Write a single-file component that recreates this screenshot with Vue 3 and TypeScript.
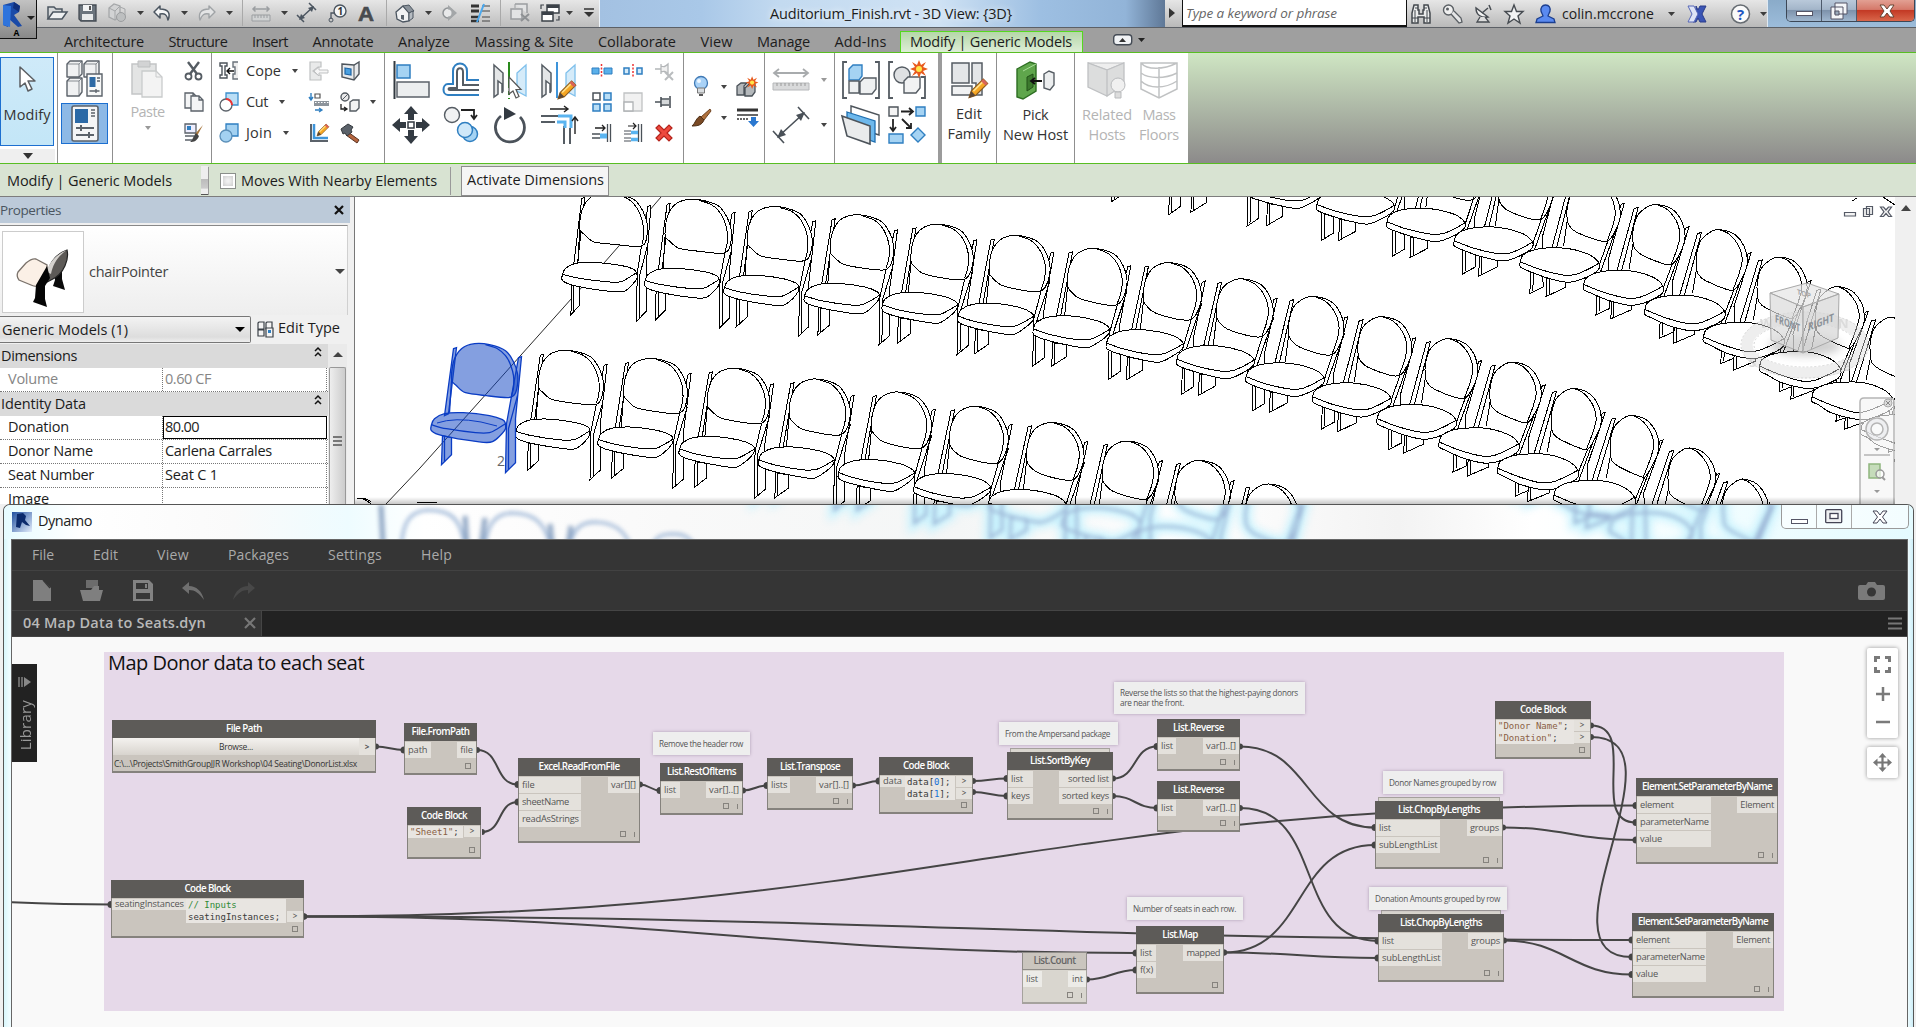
<script setup lang="ts">
import { h } from 'vue'

type Pt = [number, number]

/* Spreads letters so that a label takes the given width */
const vFit = {
  mounted(el: HTMLElement, b: { value?: number }) {
    if (!b.value) return
    const n = (el.textContent || '').length
    el.style.letterSpacing = (b.value - el.getBoundingClientRect().width) / n + 'px'
  },
}

/* ---------- icons: [width, height, markup] ---------- */
const D = '#4b5560'
const B = '#2f7fc1'
const cubes = (s: string, f: string) =>
  `<g fill="${f}" stroke="${s}" stroke-width="1.4" stroke-linejoin="round"><path d="M1 4l3-3h12v13l-3 3H1z"/><path d="M18 4l3-3h12v13l-3 3H18z"/><path d="M1 21l3-3h12v14l-3 4H1z"/><path d="M1 4h12v13M13 4l3-3M18 4h12v10M30 4l3-3M1 21h12v15M13 21l3-3" fill="none" stroke-width=".7"/></g>`
const sheet = (x: number, y: number, s: string) =>
  `<path transform="translate(${x} ${y})" d="M0 0h8l4 4v11H0z M8 0v4h4" fill="#f4f5f6" stroke="${s}" stroke-width="1.3"/>`
const pencil = (x: number, y: number, k = 1) =>
  `<g transform="translate(${x} ${y}) scale(${k})"><path d="M0 17l2-6L13 0l4 4L6 15z" fill="#f6a623" stroke="#8a5a1c" stroke-width="1"/><path d="M11 2l2-2 4 4-2 2z" fill="#d9635a"/><path d="M0 17l2-6 4 4z" fill="#5a4636"/><path d="M4 11l8-8" stroke="#ffe08a" stroke-width="1.5"/></g>`
const burst = (x: number, y: number) =>
  `<g transform="translate(${x} ${y})"><path d="M0-9l2 5 5-3-3 5 5 2-5 2 3 5-5-3-2 5-2-5-5 3 3-5-5-2 5-2-3-5 5 3z" fill="#e85a1c"/><circle r="3" fill="#ffe54a"/></g>`

const icons: Record<string, [number, number, string]> = {
  open: [22, 20, `<path d="M2 16V4h6l2 2h6v3" fill="#d5d8da" stroke="${D}" stroke-width="1.5"/><path d="M2 16L7 9h14l-5 7z" fill="#eef0f1" stroke="${D}" stroke-width="1.5"/>`],
  save: [19, 20, `<path d="M1 2h17v16H3l-2-2z" fill="#6b747d" stroke="#454c54" stroke-width="1.3"/><path d="M5 2h9v6H5z" fill="#f2f3f4"/><path d="M11 3h2v4h-2z" fill="#555"/><path d="M4 11h11v6H4z" fill="#e8eaeb"/>`],
  sync: [21, 20, `<path d="M2 5l5-4 6 2v10l-5 4-6-3z" fill="#d2d3d4" stroke="#a5a7a9" stroke-width="1.3"/><path d="M2 5l6 3 5-5M8 8v9M13 4l5 2v8" stroke="#a5a7a9" fill="none"/><circle cx="14" cy="14" r="4.5" fill="#bdbfc0" stroke="#9b9d9f"/>`],
  undo: [21, 20, `<path d="M8 3L2 9l6 6v-4c5-1 7 1 8 6 3-7 0-11-8-11z" fill="#f5f6f7" stroke="${D}" stroke-width="1.5" stroke-linejoin="round"/>`],
  redo: [20, 20, `<path d="M12 3l6 6-6 6v-4c-5-1-7 1-9 6-2-7 1-11 9-11z" fill="#e3e4e5" stroke="#9fa3a6" stroke-width="1.4" stroke-linejoin="round"/>`],
  qmeas: [20, 20, `<path d="M2 6h16M4.5 3.5L2 6l2.5 2.5M15.5 3.5L18 6l-2.5 2.5" stroke="#9b9ea1" stroke-width="1.5" fill="none"/><path d="M1 12h18v6H1z" fill="#d0d2d3" stroke="#9b9ea1"/><path d="M4 12v3M7 12v3M10 12v3M13 12v3M16 12v3" stroke="#9b9ea1"/>`],
  qdim: [21, 20, `<path d="M4 16L17 4M1 12l7 7M13 0l7 7" stroke="${D}" stroke-width="1.5"/><path d="M3 17l2-6 4 4zM18 3l-2 6-4-4z" fill="${D}"/>`],
  qtag: [20, 20, `<circle cx="13" cy="8" r="6" fill="#f5f6f7" stroke="${D}" stroke-width="1.4"/><path d="M8 10H4v6" stroke="${D}" fill="none" stroke-width="1.3"/><circle cx="4" cy="17" r="2" fill="none" stroke="${D}"/><text x="10.5" y="12" font-size="10" font-weight="700" font-family="Open Sans" fill="#333">1</text>`],
  qA: [18, 20, `<text x="1" y="18" font-size="21" font-weight="700" font-family="Liberation Sans" fill="#484b4f" stroke="#484b4f" stroke-width=".6" textLength="16" lengthAdjust="spacingAndGlyphs">A</text>`],
  house: [20, 20, `<path d="M1 9l7-6 6 7v8l-6 1-6-3z" fill="#f1f2f3" stroke="${D}" stroke-width="1.3"/><path d="M8 3l6-1 5 6-5 2z" fill="#8b939b" stroke="${D}"/><path d="M14 10l4-2v7l-4 3z" fill="#b6bcc2" stroke="${D}"/><path d="M6 12h3v5l-3-1z" fill="#5a636c"/>`],
  section: [16, 20, `<circle cx="6" cy="10" r="5" fill="#e4e5e6" stroke="#8f9396" stroke-width="1.5"/><path d="M6 2l9 8-9 8z" fill="#a3a6a8"/><circle cx="6" cy="10" r="3.5" fill="#e8e9ea"/>`],
  thin: [21, 20, `<path d="M1 3h8M1 8h8" stroke="#333" stroke-width="3"/><path d="M1 14h8M1 18h8" stroke="#333" stroke-width="2.5"/><path d="M12 3h8M12 8h8M12 14h8M12 18h8" stroke="#444" stroke-width="1"/><path d="M14 1L7 19" stroke="#4aa8ee" stroke-width="2"/>`],
  closev: [21, 20, `<path d="M6 1h12v9M2 6h11v10H2z" fill="#e2e3e4" stroke="#9a9da0" stroke-width="1.5"/><path d="M6 1v4" stroke="#9a9da0"/><path d="M12 11l8 7M20 11l-8 7" stroke="#8e9194" stroke-width="2"/>`],
  switchv: [20, 20, `<path d="M7 2h12v8H7z" fill="#fff" stroke="#3b4148" stroke-width="1.5"/><path d="M7 3.5h12" stroke="#3b4148" stroke-width="3"/><path d="M2 9h11v9H2z" fill="#fff" stroke="#3b4148" stroke-width="1.5"/><path d="M2 10.5h11" stroke="#3b4148" stroke-width="3"/><path d="M4 2H1v4M16 17h3v-4" fill="none" stroke="#3b4148" stroke-width="1.2"/>`],
  custom: [12, 10, `<path d="M1 1h10" stroke="#333" stroke-width="1.5"/><path d="M1 4h10l-5 5z" fill="#333"/>`],
  dn: [7, 4, `<path d="M0 0h7L3.5 4z" fill="#3d3d3d"/>`],
  bino: [20, 20, `<path d="M3 1h4v5h1v4h4V6h1V1h4l2 8v10h-6v-6H7v6H1V9z" fill="#eceded" stroke="#43484e" stroke-width="1.5"/><path d="M4 6v12M16 6v12M1 14h6M13 14h6M4 4h3M13 4h3" stroke="#43484e" stroke-width="1"/>`],
  key: [21, 20, `<circle cx="6.5" cy="6" r="5" fill="#f0f0f0" stroke="#5a5f64" stroke-width="1.4"/><circle cx="5.5" cy="5" r="1.5" fill="#5a5f64"/><path d="M9 10l8 9 3-1-1-4-7-7" fill="#e5e6e7" stroke="#5a5f64" stroke-width="1.3"/>`],
  sat: [19, 20, `<path d="M2 4c0 7 5 10 12 9z" fill="#f2f2f2" stroke="#474c52" stroke-width="1.4"/><path d="M8 9l6-5M15 1l2 5" stroke="#474c52" stroke-width="1.5"/><path d="M6 13l-3 5h12l-4-5" fill="#ddd" stroke="#474c52" stroke-width="1.3"/>`],
  star: [20, 20, `<path d="M10 1l2.5 6.5H19l-5 4.5 2 7-6-4-6 4 2-7-5-4.5h6.5z" fill="#f2f3f4" stroke="#454a50" stroke-width="1.4"/>`],
  person: [21, 20, `<path d="M10.5 1c4 0 5 3 4.5 6-.5 2-1.5 3-2 5l6 3 1 3.5H1L2 15l6-3c-.5-2-1.5-3-2-5-.5-3 1-6 4.5-6z" fill="#5a8af0" stroke="#1c3f8f" stroke-width="1.3"/>`],
  exch: [19, 18, `<path d="M9 1l2 4 2-4h6l-4 8 4 8h-6l-2-4-2 4H6l3-8z" fill="#3b55b5" stroke="#2a3c8a"/><path d="M1 1h6l4 8-4 8H1l4-8z" fill="#dfe5f6" stroke="#5667b8"/>`],
  help: [21, 20, `<circle cx="10.5" cy="10" r="9" fill="#fafafa" stroke="#666c72" stroke-width="1.5"/><text x="7" y="15.5" font-size="15" font-weight="700" font-family="Open Sans" fill="#1d55c0">?</text>`],
  arrow: [18, 27, `<path d="M2 1v20l5-4 3 8 4-2-4-8h7z" fill="#fff" stroke="#5c5f63" stroke-width="1.5" stroke-linejoin="round"/>`],
  typeprops: [38, 38, cubes('#5b626a', '#f0f1f2') + `<path d="M21 14h15v22H21z" fill="#f7f8f8" stroke="#5b626a" stroke-width="1.4"/><path d="M23.5 17h6v10h-6z" fill="#2d6aa5"/><path d="M31 18h3M31 21h3M23.5 31h10M30 29v4" stroke="#5b626a" stroke-width="1.3"/>`],
  props: [28, 37, `<rect x="1" y="1" width="26" height="35" rx="2" fill="#f4f5f6" stroke="#5b626a" stroke-width="1.6"/><path d="M4 4h13v14H4z" fill="#2b69a6"/><path d="M20 5h4M20 8h4M20 11h4" stroke="#5b626a" stroke-width="1.4"/><path d="M5 23h18M5 30h18M10 20v6M18 27v6" stroke="#5b626a" stroke-width="2"/>`],
  paste: [35, 38, `<path d="M2 4h24v30H2z" fill="#e3e4e4" stroke="#c3c5c6" stroke-width="1.5"/><path d="M8 1h12v6H8z" fill="#d2d3d4" stroke="#bdbfc0"/><path d="M12 11h14l6 6v20H12z" fill="#f3f3f3" stroke="#c9cbcc" stroke-width="1.3"/><path d="M26 11v6h6" fill="none" stroke="#c9cbcc"/>`],
  cut: [20, 20, `<path d="M4 1l9 12M15 1L6 13" stroke="#555c63" stroke-width="2.4"/><circle cx="4.5" cy="15.5" r="3" fill="none" stroke="#555c63" stroke-width="1.8"/><circle cx="14.5" cy="15.5" r="3" fill="none" stroke="#555c63" stroke-width="1.8"/>`],
  copy: [20, 20, sheet(1, 1, '#5b626a') + sheet(7, 4, '#5b626a')],
  match: [20, 20, `<path d="M1 1h11v9H1z" fill="#eef" stroke="#5b626a" stroke-width="1.3"/><path d="M3 3h4v4H3z" fill="${B}"/><path d="M1 13h9M1 17h7" stroke="#5b626a" stroke-width="1.5"/><path d="M19 2l-8 9 2 2z" fill="#a8763c"/><path d="M12 10l3 3c-2 5-5 6-9 6 3-2 3-6 6-9z" fill="#444"/>`],
  cope: [20, 20, `<path d="M1 2h7v3H6v9h2v3H1v-3h2V5H1z" fill="#fff" stroke="#4d545b" stroke-width="1.4"/><path d="M19 1h-5v5h2v7h-2v5h5" fill="#eee" stroke="#6b737b" stroke-width="1.4"/><path d="M8 10h7M11 7l-3 3 3 3" stroke="#111" fill="none" stroke-width="1.4"/>`],
  cutg: [20, 20, `<path d="M7 1h12v12H7z" fill="#b9def6" stroke="#3d8ecb" stroke-width="1.3"/><circle cx="7" cy="13" r="6" fill="#fff" stroke="#5b626a" stroke-width="1.3"/><path d="M7 7a6 6 0 0 1 6 6" fill="none" stroke="#e33" stroke-width="2"/>`],
  join: [20, 20, `<path d="M7 1h12v12H7z" fill="#a3d1f1" stroke="#2f7fc1" stroke-width="1.3"/><circle cx="7" cy="13" r="6" fill="#a3d1f1" stroke="#5b8fb8" stroke-width="1.3"/>`],
  notch: [20, 20, `<path d="M1 1h11v5l-3 0-5 4 5 4h3v5H1z" fill="#e9eaea" stroke="#bfc1c2" stroke-width="1.2"/><path d="M5 10l5-4v3h9v3h-9v3z" fill="#f6f6f6" stroke="#bfc1c2"/>`],
  wallop: [19, 20, `<path d="M1 3l12 1 5-3v12l-5 6-12-3z" fill="#e8eaec" stroke="#4d545b" stroke-width="1.4"/><path d="M13 4v15" stroke="#4d545b"/><path d="M4 7l6 1v6l-6-1z" fill="#4aa0e0" stroke="#1f65a5" stroke-width="1.2"/>`],
  beam: [20, 20, `<path d="M2 1v6M0 5l2 3 2-3" stroke="${B}" fill="none" stroke-width="1.4"/><path d="M6 2h5v4H6z" fill="none" stroke="#555" stroke-width="1.2"/><path d="M5 9h15v5H5z" fill="#8d949b"/><path d="M6 10.5h14" stroke="#fff" stroke-dasharray="1.5 1.5"/><path d="M6 18h6M10 16l3 2-3 2" stroke="${B}" fill="none" stroke-width="1.3"/>`],
  splitf: [20, 20, `<circle cx="5" cy="5" r="4" fill="#e9e9ea" stroke="#555c63" stroke-width="1.4"/><path d="M2 8l6-6" stroke="#555c63"/><path d="M10 10l3-2h6v8l-3 3h-6z" fill="#f2f3f3" stroke="#555c63" stroke-width="1.4"/><path d="M1 12v5h5M4 15l3 2-3 2" fill="none" stroke="#222" stroke-width="1.3"/>`],
  walljoin: [20, 20, `<path d="M2 1v17h17" stroke="#5b626a" fill="none" stroke-width="2"/><path d="M5 1v14h14" stroke="#3d94da" fill="none" stroke-width="2.5"/>` + pencil(8, 1, 0.7)],
  hammer: [20, 20, `<path d="M8 9l11 8-2 3L6 12z" fill="#b5653f" stroke="#5a3320"/><path d="M1 6l7-5 5 3-2 3 1 2-5 4-2-3-2 1z" fill="#5b626a" stroke="#33383d"/>`],
  align: [37, 38, `<path d="M1.5 0v38" stroke="#333a41" stroke-width="2"/><path d="M4 4h13v13H4z" fill="#a5d3f3" stroke="${B}" stroke-width="1.5"/><path d="M4 21h32v15H4z" fill="#eceeef" stroke="#5b626a" stroke-width="1.5"/>`],
  offset: [38, 38, `<path d="M37 34H6c-6 0-6-11 0-11h5V10c0-10 14-10 14 0v9h12" fill="none" stroke="${B}" stroke-width="2"/><path d="M37 29H8c-2 0-2-2 0-2h7V11c0-5 6-5 6 0v13h16" fill="none" stroke="#555c63" stroke-width="2"/>`],
  mirror1: [36, 38, `<path d="M2 4l9 8v18l-1 2v-9l-4-3v13l-4 3z" fill="#e4e6e7" stroke="#555c63" stroke-width="1.5"/><path d="M34 4l-9 8v18l9 5z" fill="#d5ebf9" stroke="#7fc0ec" stroke-width="1.3"/><path d="M17 1v37" stroke="#2a8a1c" stroke-width="2" stroke-dasharray="26 3 4 3"/><path d="M17 16v17l4-3 3 7 3-1.5-3-7h5z" fill="#fff" stroke="#555" stroke-width="1.2"/>`],
  mirror2: [38, 38, `<path d="M2 4l9 8v18l-1 2v-9l-4-3v13l-4 3z" fill="#e4e6e7" stroke="#555c63" stroke-width="1.5"/><path d="M35 4l-9 8v18l9 5z" fill="#d5ebf9" stroke="#7fc0ec" stroke-width="1.3"/><path d="M17 1v36" stroke="#3d94da" stroke-width="2"/>` + pencil(18, 20, 1.05)],
  move: [38, 38, `<path d="M19 0l7 8h-4v6h-6V8h-4zM19 38l-7-8h4v-6h6v6h4zM0 19l8-7v4h6v6H8v4zM38 19l-8 7v-4h-6v-6h6v-4z" fill="#333a42"/><path d="M16 16h6v6h-6z" fill="#fff" stroke="#333a42" stroke-width="1.5"/>`],
  copyel: [36, 38, `<circle cx="9" cy="9" r="7.5" fill="#f1f2f3" stroke="#555c63" stroke-width="1.4"/><circle cx="27" cy="28" r="7.5" fill="#a5d3f3" stroke="${B}" stroke-width="1.5"/><circle cx="22" cy="24" r="7.5" fill="#cfe8f9" stroke="${B}" stroke-width="1.5"/><path d="M18 4h13v9M28 9l3 4 3-4" fill="none" stroke="#222" stroke-width="1.8"/>`],
  rotate: [36, 38, `<path d="M9 10A14.5 14.5 0 1 0 28 11" fill="none" stroke="#4b525a" stroke-width="2.8"/><path d="M12 1l12 7-12 6z" fill="#333a42"/>`],
  trim: [38, 38, `<path d="M1 10h17M1 16h14M24 20v18M30 22v16" stroke="#555c63" stroke-width="2"/><path d="M18 10h13v12M17 16h8v6" stroke="#5ab4f0" fill="none" stroke-width="3"/><path d="M10 3h17M24 0l4 3-4 3M35 28V12M32 15l3-4 3 4" fill="none" stroke="#222" stroke-width="1.4"/>`],
  split: [20, 14, `<path d="M0 4h7v6H0zM12 4h8v6h-8z" fill="#5ab0ea" stroke="${B}"/><path d="M9.5 0v14" stroke="#e33" stroke-width="1.5" stroke-dasharray="2 1.5"/>`],
  splitgap: [20, 14, `<path d="M1 4h5v6H1zM14 4h5v6h-5z" fill="#d5ebf9" stroke="${B}" stroke-width="1.5"/><path d="M10 0v14" stroke="#e33" stroke-width="1.5" stroke-dasharray="2 1.5"/>`],
  unpin: [20, 20, `<path d="M1 8h6M7 3v10M7 5c3 1 4 1 7-2v10c-3-3-4-3-7-2" fill="#f0f0f0" stroke="#b3b6b8" stroke-width="1.3"/><path d="M11 11l8 8M19 11l-8 8" stroke="#b9bcbe" stroke-width="2"/>`],
  pin: [20, 20, `<path d="M1 10h6M7 5v10M7 7h8M7 13h8M16 4v12" fill="none" stroke="#4a5158" stroke-width="1.6"/><path d="M8 8h7v4H8z" fill="#d5d8da"/>`],
  array: [20, 20, `<path d="M1 1h7v7H1z" fill="#fff" stroke="#4a5158" stroke-width="1.5"/><path d="M12 1h7v7h-7zM1 12h7v7H1zM12 12h7v7h-7z" fill="#b9def6" stroke="${B}" stroke-width="1.5"/>`],
  scale: [20, 20, `<path d="M1 1h18v18H1z" fill="#f1f1f1" stroke="#c0c2c3" stroke-width="1.3"/><path d="M1 10h9v9H1z" fill="#fff" stroke="#b0b3b5" stroke-width="1.3"/>`],
  trims: [20, 20, `<path d="M18.5 1v18M15.5 1v18" stroke="#4a5158" stroke-width="1.3"/><path d="M3 5h10M10 2l3 3-3 3" fill="none" stroke="#222" stroke-width="1.3"/><path d="M0 11h8M0 15h8" stroke="#4a5158" stroke-width="1.5"/><path d="M8 13h7" stroke="#5ab4f0" stroke-width="5"/>`],
  trimm: [20, 20, `<path d="M18.5 1v18M15.5 1v18" stroke="#4a5158" stroke-width="1.3"/><path d="M5 3h8M10 0l3 3-3 3" fill="none" stroke="#222" stroke-width="1.2"/><path d="M1 8h7M1 11h7M1 15h7M1 18h7" stroke="#4a5158" stroke-width="1.2"/><path d="M8 9.5h7M8 16.5h7" stroke="#5ab4f0" stroke-width="3.5"/>`],
  del: [18, 18, `<path d="M1 4l3-3 5 5 5-5 3 3-5 5 5 5-3 3-5-5-5 5-3-3 5-5z" fill="#ee4a3e" stroke="#b5251d" stroke-width="1.2"/>`],
  bulb: [16, 21, `<circle cx="8" cy="7" r="6.5" fill="#a9d2f7" stroke="#3f79b5" stroke-width="1.3"/><path d="M4.5 12h7v5h-7z" fill="#d9dde0" stroke="#777"/><path d="M6 19h4" stroke="#555" stroke-width="2"/><circle cx="6" cy="5" r="2" fill="#eef7ff"/>`],
  override: [22, 20, `<path d="M1 9l4-3h6l-3 3v9H1zM9 11l4-4h6v8l-3 4H9z" fill="#b4b8bb" stroke="#4a5158" stroke-width="1.3"/>` + `<g transform="scale(.7)">${burst(23, 8)}</g>`],
  paint: [20, 19, `<path d="M19 1l-9 8 3 3 7-9z" fill="#b0713d" stroke="#6f4422"/><path d="M9 8l4 4c-2 5-6 6-12 6 3-2 4-8 8-10z" fill="#7a4a25" stroke="#4d2f17"/>`],
  linework: [21, 19, `<path d="M0 2h21" stroke="#333" stroke-width="3"/><path d="M0 7h21" stroke="#333" stroke-width="1.5"/><path d="M0 11h12" stroke="#333" stroke-dasharray="2 1" stroke-width="1.5"/><path d="M14 9h5v4h3l-5.5 6L11 13h3z" fill="#2b78d0"/>`],
  measure: [38, 24, `<path d="M2 5h34M7 1L2 5l5 4M31 1l5 4-5 4" fill="none" stroke="#a8abad" stroke-width="1.8"/><path d="M1 15h36v7H1z" fill="#d9dadb" stroke="#b6b8ba"/><path d="M5 15v3M9 15v3M13 15v3M17 15v3M21 15v3M25 15v3M29 15v3M33 15v3" stroke="#999"/>`],
  dim: [40, 38, `<path d="M8 30L32 8M2 25l11 12M27 1l11 12" stroke="#4a5158" stroke-width="1.6"/><path d="M6 32l4-9 5 6zM34 6l-4 9-5-6z" fill="#4a5158"/>`],
  group: [40, 38, `<path d="M6 1H2v36h4M34 1h4v36h-4" fill="none" stroke="#555c63" stroke-width="1.8"/><path d="M8 8l4-4h9v11l-3 4H8z" fill="#a5d3f3" stroke="${B}" stroke-width="1.4"/><path d="M8 20h10v12H8zM19 21l4-4h12v11l-4 5H19z" fill="#eef0f1" stroke="#555c63" stroke-width="1.4"/>`],
  assembly: [40, 38, `<path d="M6 1H2v36h4M34 16h4v21h-4" fill="none" stroke="#555c63" stroke-width="1.8"/><circle cx="15" cy="14" r="8" fill="#dfe1e3" stroke="#555c63" stroke-width="1.4"/><path d="M17 20l4-4h12v11l-4 5H17z" fill="#f1f2f3" stroke="#555c63" stroke-width="1.4"/>` + burst(32, 8)],
  parts: [40, 40, `<path d="M10 1l28 9v20l-28-9z" fill="#fff" stroke="#4d545b" stroke-width="1.4"/><path d="M6 7l28 9v21L6 27z" fill="#6db8ec" stroke="#1f6fb0" stroke-width="1.3"/><path d="M1 11l28 10v18L6 31z" fill="#e9ebec" stroke="#4d545b" stroke-width="1.6"/>`],
  similar: [38, 38, `<path d="M1 1h9v9H1z" fill="#f4f4f4" stroke="#4d545b" stroke-width="1.4"/><path d="M28 1h9v9h-9zM1 28h14v9H1z" fill="#a5d3f3" stroke="${B}" stroke-width="1.4"/><path d="M30 22l7 7-7 7-7-7z" fill="#a5d3f3" stroke="${B}" stroke-width="1.4"/><path d="M13 5.500h12M21 2l4 3.500L21 9M5 13v12M2 21l3 4 3-4M14 13l9 9M23 17v5h-5" fill="none" stroke="#222" stroke-width="1.800"/>`],
  editfam: [38, 38, `<path d="M2 2h17v20H2zM22 2h10v32h-6V22h-4z" fill="#e4e6e8" stroke="#555c63" stroke-width="1.5"/><path d="M2 25h20v9H2z" fill="#f1f2f3" stroke="#555c63" stroke-width="1.5"/>` + pencil(19, 18, 1.1)],
  host: [39, 39, `<path d="M1 8l13-7 6 2v27l-13 8-6-2z" fill="#5fa64c" stroke="#2d6e22" stroke-width="1.4"/><path d="M7 10l13-7" stroke="#a8dd98"/><path d="M11 16l6-3v13l-6 4z" fill="#3c7a2e" stroke="#225218"/><path d="M28 13l5-3 5 2v12l-4 5-6-2z" fill="#eceeef" stroke="#555c63" stroke-width="1.4"/><path d="M16 20h10M19 17l-4 3 4 3" fill="none" stroke="#111" stroke-width="1.8"/>`],
  related: [40, 40, `<path d="M1 2h36L20 9z" fill="#eee" stroke="#bfc1c3"/><path d="M1 2v24l19 9V9zM37 2v16M20 9l17-7v22l-17 11z" fill="#dcdddd" stroke="#bfc1c3" stroke-width="1.3"/><circle cx="31" cy="24" r="7" fill="#f0f0f0" stroke="#b9bbbd"/><path d="M28 31h6v6h-6z" fill="#ddd" stroke="#b9bbbd"/>`],
  mass: [40, 40, `<path d="M2 2h36v26L20 37 2 28zM2 2c6 7 22 7 36 0M2 12c8 6 24 6 36 0M2 20c8 8 24 8 36 0M20 6v31" fill="none" stroke="#c0c2c3" stroke-width="1.5"/>`],
  dnew: [18, 21, `<path d="M0 0h10l8 8v13H0z" fill="#7f7f7f"/><path d="M10 0l7 8" stroke="#363636" stroke-width="1.4"/>`],
  dopen: [24, 21, `<path d="M6 0h12v8H6z" fill="#6c6c6c"/><path d="M0 10h11l3-4h5v4h4l-3 11H3z" fill="#7f7f7f"/>`],
  dsave: [20, 21, `<path d="M0 0h16l4 4v17H0z" fill="#828282"/><path d="M3 3h12v6H3zM3 13h14v6H3z" fill="#363636"/><path d="M12 4h2v4h-2z" fill="#828282"/>`],
  dundo: [22, 18, `<path d="M7 0L0 6l7 6V8c6 0 10 3 15 10C20 9 14 4 7 4z" fill="#6f6f6f"/>`],
  dredo: [22, 18, `<path d="M15 0l7 6-7 6V8C9 8 5 11 0 18 2 9 8 4 15 4z" fill="#484848"/>`],
  cam: [27, 18, `<path d="M2 3h6l2-3h7l2 3h6q2 0 2 2v11q0 2-2 2H2q-2 0-2-2V5q0-2 2-2z" fill="#7a7a7a"/><circle cx="13.5" cy="10" r="4.5" fill="#363636"/>`],
  fitv: [17, 17, `<path d="M1.5 6V1.5H6M11 1.5h4.5V6M15.5 11v4.5H11M6 15.5H1.5V11" fill="none" stroke="#7a7a7a" stroke-width="3"/>`],
  plus: [14, 14, `<path d="M7 0v14M0 7h14" stroke="#7a7a7a" stroke-width="2.5"/>`],
  minus: [14, 4, `<path d="M0 2h14" stroke="#7a7a7a" stroke-width="2.5"/>`],
  pan: [19, 19, `<path d="M9.5 2v15M2 9.5h15" stroke="#777" stroke-width="2.2"/><path d="M9.5 0l4 4.5h-8zM9.5 19l4-4.5h-8zM0 9.5l4.5-4v8zM19 9.5l-4.5-4v8z" fill="#777"/>`],
  etype: [17, 17, `<g fill="#f4f4f4" stroke="#3a4047" stroke-width="1.2"><path d="M1 2l1-1h5v7H1zM9 2l1-1h5v7H9zM1 9h6v6H1z"/><path d="M9 7h7v9H9z"/></g><path d="M11 9h3v3h-3z" fill="${B}"/>`],
  chev: [8, 10, `<path d="M1 4l3-3 3 3M1 9l3-3 3 3" fill="none" stroke="#111" stroke-width="1.5"/>`],
}
const Ico = (p: { n: string }) => {
  const [w, hh, m] = icons[p.n]
  return h('svg', { width: w, height: hh, viewBox: `0 0 ${w} ${hh}`, style: 'display:block;flex:none;overflow:visible', innerHTML: m })
}
Ico.props = ['n']

const qat: [string, number][] = [
  ['open', 46], ['save', 78], ['sync', 107], ['dn', 137], ['undo', 152], ['dn', 181], ['redo', 197], ['dn', 226],
  ['|', 242], ['qmeas', 251], ['dn', 281], ['qdim', 296], ['qtag', 327], ['qA', 357], ['|', 386], ['house', 395],
  ['dn', 425], ['section', 442], ['thin', 470], ['|', 500], ['closev', 509], ['switchv', 540], ['dn', 566], ['custom', 583],
]
const wOf = (n: string) => (n === '|' ? 1 : icons[n][0])
const qatGap = (i: number) => qat[i][1] - (i ? qat[i - 1][1] + wOf(qat[i - 1][0]) : 0)

const tabs: [string, number][] = [
  ['Architecture', 80], ['Structure', 59], ['Insert', 36], ['Annotate', 61], ['Analyze', 52], ['Massing & Site', 99],
  ['Collaborate', 78], ['View', 32], ['Manage', 53], ['Add-Ins', 52],
]

/* ---------- auditorium chairs: blend between two viewing angles ---------- */
const A: Record<string, Pt[]> = {
  back: [[20, -44], [22, -62], [30, -75], [43, -80], [58, -79], [74, -73], [82, -62], [86, -50], [86, -39], [83, -29], [76, -26], [55, -28], [34, -31], [25, -38]],
  rim: [[54, -79], [66, -75], [74, -68], [79, -59], [82, -48], [82, -36], [80, -28]],
  lp: [[22, -75], [25, -76], [17, -10], [13, -8]],
  rp: [[87, -66], [90, -67], [84, -5], [84, 39], [74, 49], [75, 0]],
  rq: [[86, -28], [77, 5], [77, 46]],
  ll: [[11, 12], [10, 41], [20, 31], [20, 14]],
  lm: [[13, 12], [13, 38]],
  seat: [[0, 1], [3, -5], [13, -10], [32, -11], [58, -8], [71, -4], [74, 0], [73, 7], [61, 18], [46, 18], [11, 12], [0, 7]],
  top: [[0, 1], [15, 5], [44, 9], [58, 9], [66, 5], [74, 0]],
}
const Z: Record<string, Pt[]> = {
  back: [[51, -40], [51, -54], [56, -69], [68, -78], [80, -78], [91, -73], [99, -62], [102, -50], [101, -40], [94, -25], [89, -19], [82, -19], [60, -28], [53, -34]],
  rim: [[74, -79], [83, -75], [90, -68], [95, -59], [97, -48], [94, -35], [88, -19]],
  lp: [[52, -75], [56, -76], [39, -13], [34, -12]],
  rp: [[103, -55], [106, -56], [89, -2], [90, 49], [76, 55], [77, 12]],
  rq: [[103, -48], [80, 14], [79, 52]],
  ll: [[29, 18], [28, 35], [49, 26], [49, 20]],
  lm: [[31, 18], [31, 33]],
  seat: [[0, 1], [3, -6], [18, -12], [45, -13], [68, -7], [79, 2], [78, 11], [60, 20], [45, 22], [24, 17], [8, 10], [0, 6]],
  top: [[0, 1], [20, 9], [43, 15], [56, 14], [70, 8], [79, 3]],
}
function mix(k: string, t: number, x: number, y: number): Pt[] {
  return A[k].map((a, i) => [x + a[0] + (Z[k][i][0] - a[0]) * t, y + a[1] + (Z[k][i][1] - a[1]) * t])
}
const f1 = (n: number) => n.toFixed(1)
function line(p: Pt[], close = false) {
  return 'M' + p.map((q) => f1(q[0]) + ' ' + f1(q[1])).join('L') + (close ? 'Z' : '')
}
/* curve that passes through every point */
function smooth(p: Pt[], close: boolean) {
  const n = p.length
  const at = (i: number) => (close ? p[(i + n) % n] : p[Math.max(0, Math.min(n - 1, i))])
  let d = 'M' + f1(p[0][0]) + ' ' + f1(p[0][1])
  for (let i = 0; i < (close ? n : n - 1); i++) {
    const [a, b, c, e] = [at(i - 1), at(i), at(i + 1), at(i + 2)]
    d += `C${f1(b[0] + (c[0] - a[0]) / 7)} ${f1(b[1] + (c[1] - a[1]) / 7)} ${f1(c[0] - (e[0] - b[0]) / 7)} ${f1(c[1] - (e[1] - b[1]) / 7)} ${f1(c[0])} ${f1(c[1])}`
  }
  return close ? d + 'Z' : d
}
interface Part { d: string; o?: boolean }
function chair(x: number, y: number, t: number): Part[] {
  const g = (k: string) => mix(k, t, x, y)
  const b = g('back')
  const lip: Pt[] = [[b[0][0], b[0][1]], [b[0][0] - 2 - t * 2, b[0][1] + 33 - t * 8]]
  return [
    { d: line(g('rp'), true) }, { d: line(g('rq')), o: true }, { d: line(g('ll'), true) }, { d: line(g('lm')), o: true },
    { d: line(g('lp'), true) }, { d: line(lip), o: true }, { d: smooth(b, true) }, { d: smooth(g('rim'), false), o: true },
    { d: smooth(g('seat'), true) }, { d: smooth(g('top'), false), o: true },
  ]
}
const rowTop: Pt[] = [[562.5, 262.3], [645.1, 268.3], [724.4, 275.3], [804.6, 283.3], [882.5, 292.3], [958, 303.3], [1033.5, 316], [1106.6, 330], [1176.9, 346], [1246.2, 363.3], [1312.7, 383.3], [1377.2, 405], [1439.2, 428.3], [1497.8, 454.3], [1554, 481], [1609.2, 513.3], [1660.5, 544.3]]
const rowLow: Pt[] = [[515.8, 419.3], [598.4, 427.3], [679.6, 436.7], [758.8, 447.3], [838.6, 460], [914.1, 474], [988.6, 490], [1061.8, 508.3], [1132, 527.3], [1199, 550.7]]
const rowHigh: Pt[] = [[1094, 150.7], [1172, 161.7], [1246.2, 175.7], [1317, 191], [1387, 208.3], [1454.3, 227.3], [1520.3, 248.3], [1583.8, 271], [1644.9, 296], [1703.5, 323.3], [1759.7, 352.7], [1812, 383.3], [1861, 416]]
const chairs = [
  ...rowHigh.map((p, i) => chair(p[0], p[1] + 12.5, 0.42 + 0.075 * i)),
  ...rowTop.map((p, i) => chair(p[0], p[1] + 11 + i * 0.15, (i - 1) / 11)),
  ...rowLow.map((p, i) => chair(p[0], p[1] + 11 + i * 0.15, (i + 1) / 12)),
]
const ghostOf = (c: Part[]) => c[0].d + c[2].d + c[6].d + c[8].d
const picked = chair(431.5, 423.7, 0)

/* ---------- Dynamo graph ---------- */
interface Node {
  x: number; y: number; w: number; h: number; t: string; tw: number
  ins?: string[]; iw?: number; outs?: string[]; ow?: number
  code?: [string, string][][]; cw?: number; path?: boolean; stack?: boolean; ghost?: boolean; bar?: boolean
}
const S = '#8a5f45', K = '#3a3a3a', N1 = '#1874d8', C = '#2f8a35'
const nodes: Node[] = [
  { x: 112, y: 720, w: 264, h: 53, t: 'File Path', tw: 36, path: true },
  { x: 404, y: 723, w: 73, h: 52, t: 'File.FromPath', tw: 58, ins: ['path'], iw: 26, outs: ['file'], ow: 19 },
  { x: 518, y: 758, w: 122, h: 85, t: 'Excel.ReadFromFile', tw: 81, ins: ['file', 'sheetName', 'readAsStrings'], iw: 62, outs: ['var[][]'], ow: 31, bar: true },
  { x: 407, y: 807, w: 74, h: 52, t: 'Code Block', tw: 46, code: [[['"Sheet1"', S], [';', K]]], cw: 55, outs: ['>'], ow: 16 },
  { x: 111, y: 880, w: 193, h: 58, t: 'Code Block', tw: 46, ins: ['seatingInstances'], iw: 74, code: [[['// Inputs', C]], [['seatingInstances;', K]]], cw: 100, outs: ['', '>'], ow: 16 },
  { x: 660, y: 763, w: 83, h: 52, t: 'List.RestOfItems', tw: 69, ins: ['list'], iw: 19, outs: ['var[]..[]'], ow: 36, bar: true },
  { x: 767, y: 758, w: 86, h: 52, t: 'List.Transpose', tw: 60, ins: ['lists'], iw: 22, outs: ['var[]..[]'], ow: 36, bar: true },
  { x: 879, y: 757, w: 94, h: 57, t: 'Code Block', tw: 46, ins: ['data'], iw: 25, code: [[['data[', K], ['0', N1], ['];', K]], [['data[', K], ['1', N1], ['];', K]]], cw: 50, outs: ['>', '>'], ow: 16 },
  { x: 1007, y: 752, w: 106, h: 68, t: 'List.SortByKey', tw: 60, ins: ['list', 'keys'], iw: 25, outs: ['sorted list', 'sorted keys'], ow: 53, stack: true, bar: true },
  { x: 1157, y: 719, w: 83, h: 52, t: 'List.Reverse', tw: 51, ins: ['list'], iw: 18, outs: ['var[]..[]'], ow: 36, bar: true },
  { x: 1157, y: 781, w: 83, h: 51, t: 'List.Reverse', tw: 51, ins: ['list'], iw: 18, outs: ['var[]..[]'], ow: 36, bar: true },
  { x: 1022, y: 952, w: 65, h: 52, t: 'List.Count', tw: 42, ins: ['list'], iw: 19, outs: ['int'], ow: 18, ghost: true, bar: true },
  { x: 1136, y: 926, w: 88, h: 68, t: 'List.Map', tw: 35.5, ins: ['list', 'f(x)'], iw: 19, outs: ['mapped'], ow: 40 },
  { x: 1375, y: 801, w: 128, h: 68, t: 'List.ChopByLengths', tw: 82, ins: ['list', 'subLengthList'], iw: 64, outs: ['groups'], ow: 35, stack: true, bar: true },
  { x: 1378, y: 914, w: 126, h: 68, t: 'List.ChopByLengths', tw: 82, ins: ['list', 'subLengthList'], iw: 63, outs: ['groups'], ow: 35, stack: true, bar: true },
  { x: 1495, y: 701, w: 96, h: 58, t: 'Code Block', tw: 46, code: [[['"Donor Name"', S], [';', K]], [['"Donation"', S], [';', K]]], cw: 78, outs: ['>', '>'], ow: 16 },
  { x: 1636, y: 778, w: 142, h: 86, t: 'Element.SetParameterByName', tw: 130, ins: ['element', 'parameterName', 'value'], iw: 74, outs: ['Element'], ow: 40, bar: true },
  { x: 1632, y: 913, w: 142, h: 85, t: 'Element.SetParameterByName', tw: 130, ins: ['element', 'parameterName', 'value'], iw: 73, outs: ['Element'], ow: 40, bar: true },
]
/* drawn widths of the longer port names */
const portW: Record<string, number> = {
  parameterName: 67.5, subLengthList: 57, readAsStrings: 55.5, seatingInstances: 67, sheetName: 46, element: 33, value: 21.5,
  'sorted list': 40, 'sorted keys': 46, mapped: 33, groups: 28.5, Element: 33, 'var[]..[]': 29,
}
const notes: { x: number; y: number; w: number; h: number; l: [string, number][] }[] = [
  { x: 653, y: 732, w: 97, h: 23, l: [['Remove the header row', 84]] },
  { x: 999, y: 722, w: 119, h: 23, l: [['From the Ampersand package', 105]] },
  { x: 1114, y: 682, w: 191, h: 32, l: [['Reverse the lists so that the highest-paying donors', 178], ['are near the front.', 64]] },
  { x: 1127, y: 897, w: 116, h: 23, l: [['Number of seats in each row.', 103]] },
  { x: 1383, y: 771, w: 120, h: 23, l: [['Donor Names grouped by row', 107]] },
  { x: 1369, y: 887, w: 138, h: 23, l: [['Donation Amounts grouped by row', 125]] },
]
const wires: number[][] = [
  [-90, 900, 111, 904.5], [376, 746.5, 404, 750], [477, 750, 518, 784.5], [482, 832, 518, 802], [640, 784.5, 660, 790.5],
  [743, 790.5, 767, 785.5], [853, 785.5, 879, 781], [973, 781, 1007, 778.5], [973, 792, 1007, 796], [1113, 778.5, 1157, 746.5],
  [1113, 796, 1157, 808], [1240, 746.5, 1375, 827.5], [1240, 808, 1378, 941], [304, 916.5, 1636, 805.5], [304, 916.5, 1632, 940],
  [304, 916.5, 1136, 953], [1224, 952.5, 1375, 845], [1224, 952.5, 1378, 958], [1087, 979.5, 1136, 970], [1503, 827.5, 1636, 840],
  [1504, 940.5, 1632, 974.5], [1591, 725.5, 1636, 822.5], [1591, 737, 1632, 957],
]
const wire = ([a, b, c, d]: number[]) => {
  const o = Math.hypot(c - a, d - b) * 0.45
  return `M${a} ${b}C${a + o} ${b} ${c - o} ${d} ${c} ${d}`
}
const px = (n: { x: number; y: number; w: number; h: number }) => ({ left: n.x + 'px', top: n.y + 'px', width: n.w + 'px', height: n.h + 'px' })

const menu: [string, number][] = [['File', 22], ['Edit', 25], ['View', 32], ['Packages', 61], ['Settings', 54], ['Help', 31]]
</script>

<template>
  <div class="app">
    <header class="titlebar">
      <div class="qat">
        <template v-for="(q, i) in qat" :key="i">
          <i v-if="q[0] === '|'" class="qsep" :style="{ marginLeft: qatGap(i) + 'px' }" />
          <Ico v-else :n="q[0]" :style="{ marginLeft: qatGap(i) + 'px' }" />
        </template>
      </div>
      <div class="doc"><span v-fit="242">Auditorium_Finish.rvt - 3D View: {3D}</span></div>
      <div class="info">
        <i class="tri" />
        <div class="search"><span v-fit="151">Type a keyword or phrase</span></div>
        <Ico n="bino" class="m5" /><Ico n="key" class="m10" /><Ico n="sat" class="m11" /><Ico n="star" class="m10" /><Ico n="person" class="m10" />
        <span v-fit="92" class="user">colin.mccrone</span>
        <Ico n="dn" class="m14" /><Ico n="exch" class="m12" /><i class="qsep m12" /><Ico n="help" class="m12" /><Ico n="dn" class="m9" />
      </div>
      <div class="frame">
        <div class="winbtns">
          <span><svg width="17" height="6"><rect x=".5" y=".5" width="16" height="4" fill="#fff" stroke="#556" /></svg></span>
          <span><svg width="18" height="18"><path d="M5 1h12v11H5zM1 5h12v12H1z" fill="#f4f6f9" stroke="#556" /><path d="M5 9h4v4H5z" fill="#9ab" stroke="#556" /></svg></span>
          <span class="x"><svg width="16" height="14"><path d="M1 1h4l3 4 3-4h4l-4 6 4 6h-4l-3-4-3 4H1l4-6z" fill="#fff" stroke="#643" /></svg></span>
        </div>
      </div>
    </header>
    <div class="appbtn">
      <svg width="37" height="39" viewBox="0 0 37 39">
        <path d="M3 5l11-3 6 4-1 6-5 3 8 11-4 1-9-8-1 8-5-2z" fill="#1a4aa8" /><path d="M3 5l8 1-1 21-7-2z" fill="#2f74dc" /><path d="M14 2l6 4-1 6-6-4z" fill="#0f2f7c" />
        <path d="M27 16h8l-4 4z" fill="#222" /><text x="13.500" y="36" font-size="8.500" font-weight="700" font-family="Open Sans">A</text>
      </svg>
    </div>

    <nav class="tabs">
      <span v-for="t in tabs" :key="t[0]" v-fit="t[1]">{{ t[0] }}</span>
      <div class="active"><span v-fit="162">Modify | Generic Models</span></div>
      <svg class="pill" width="32" height="12"><rect x=".7" y=".7" width="18" height="10" rx="3" fill="#f0f2f5" stroke="#444b55" stroke-width="1.4" /><path d="M6 8h7l-3.5-4z" fill="#333" /><path d="M25 4h7l-3.5 4z" fill="#222" /></svg>
    </nav>

    <section class="ribbon">
      <div class="pnl select">
        <div class="modify"><Ico n="arrow" /><span v-fit="47">Modify</span></div>
        <div class="strip"><i /></div>
      </div>
      <div class="pnl pp"><div class="pi"><Ico n="typeprops" /></div><div class="pi on"><Ico n="props" /></div></div>
      <div class="pnl clip">
        <div class="big off"><Ico n="paste" /><span v-fit="34">Paste</span><i class="d g" /></div>
        <div class="c3"><Ico n="cut" /><Ico n="copy" /><Ico n="match" /></div>
      </div>
      <div class="pnl geo">
        <div class="c3 lab">
          <div><Ico n="cope" /><span v-fit="35">Cope</span><i class="d" /></div>
          <div><Ico n="cutg" /><span v-fit="22">Cut</span><i class="d" /></div>
          <div><Ico n="join" /><span v-fit="26">Join</span><i class="d" /></div>
        </div>
        <div class="c3"><Ico n="notch" /><Ico n="beam" /><Ico n="walljoin" /></div>
        <div class="c3"><Ico n="wallop" /><Ico n="splitf" /><Ico n="hammer" /></div>
        <div class="c3"><b /><i class="d" /><b /></div>
      </div>
      <div class="pnl mod">
        <div class="c2"><Ico n="align" /><Ico n="move" /></div>
        <div class="c2"><Ico n="offset" /><Ico n="copyel" /></div>
        <div class="c2"><Ico n="mirror1" /><Ico n="rotate" /></div>
        <div class="c2"><Ico n="mirror2" /><Ico n="trim" /></div>
        <div class="c3"><Ico n="split" /><Ico n="array" /><Ico n="trims" /></div>
        <div class="c3"><Ico n="splitgap" /><Ico n="scale" /><Ico n="trimm" /></div>
        <div class="c3"><Ico n="unpin" /><Ico n="pin" /><Ico n="del" /></div>
      </div>
      <div class="pnl view">
        <div class="v2"><Ico n="bulb" /><Ico n="paint" /></div>
        <div class="v2"><i class="d" /><i class="d" /></div>
        <div class="v2"><Ico n="override" /><Ico n="linework" /></div>
      </div>
      <div class="pnl meas">
        <div class="c2"><Ico n="measure" /><Ico n="dim" /></div>
        <div class="c2"><i class="d g" /><i class="d" /></div>
      </div>
      <div class="pnl create">
        <div class="c2"><Ico n="group" /><Ico n="parts" /></div>
        <div class="c2"><Ico n="assembly" /><Ico n="similar" /></div>
      </div>
      <div class="pnl ef"><div class="big"><Ico n="editfam" /><span v-fit="26">Edit</span><span v-fit="43">Family</span></div></div>
      <div class="pnl ho"><div class="big"><Ico n="host" /><span v-fit="26">Pick</span><span v-fit="65">New Host</span></div></div>
      <div class="pnl rh">
        <div class="big off"><Ico n="related" /><span v-fit="50">Related</span><span v-fit="37">Hosts</span></div>
        <div class="big off"><Ico n="mass" /><span v-fit="33">Mass</span><span v-fit="40">Floors</span></div>
      </div>
    </section>

    <section class="options">
      <span v-fit="165">Modify | Generic Models</span>
      <i class="grip" /><i class="gl" /><i class="box" /><span v-fit="196">Moves With Nearby Elements</span><i class="osep" />
      <div class="act"><span v-fit="137">Activate Dimensions</span></div>
    </section>

    <main class="main">
      <aside class="props">
        <div class="ph"><span v-fit="61">Properties</span><svg width="10" height="10"><path d="M1 1l8 8M9 1L1 9" stroke="#111" stroke-width="2.2" /></svg></div>
        <div class="type">
          <div class="thumb">
            <svg width="79" height="79" viewBox="0 0 79 79">
              <path d="M51 38l8-6 0 15 3 11-12-4 2-6z" fill="#0a0a0a" />
              <path d="M44 50C43 34 52 22 64 18c2 8-2 24-16 30z" fill="#5d5a57" stroke="#222" stroke-width="1.2" />
              <path d="M44 40c1-9 10-18 20-22-9 6-14 14-16 24z" fill="#d5d2ce" />
              <path d="M15 40l8-9q6-5 10-4l11 6v6l-8 15q-4 1-8-1l-12-5q-3-4-1-8z" fill="#fbf0e6" stroke="#7a726b" stroke-width="1.3" />
              <path d="M44 34l3 12-5 8 0 13 2 8-14-5 2-4 1-13z" fill="#050505" />
            </svg>
          </div>
          <span v-fit="79">chairPointer</span><i class="dd" />
        </div>
        <div class="filt">
          <div class="sel"><span v-fit="126">Generic Models (1)</span><i class="dd k" /></div>
          <Ico n="etype" /><span v-fit="62">Edit Type</span>
        </div>
        <div class="grid">
          <div class="rows">
            <div class="grp"><span v-fit="76">Dimensions</span><Ico n="chev" /></div>
            <div class="row dim"><span><em v-fit="50">Volume</em></span><span><em v-fit="46">0.60 CF</em></span></div>
            <div class="grp"><span v-fit="85">Identity Data</span><Ico n="chev" /></div>
            <div class="row"><span><em v-fit="61">Donation</em></span><span class="edit"><em v-fit="34">80.00</em></span></div>
            <div class="row"><span><em v-fit="85">Donor Name</em></span><span><em v-fit="107">Carlena Carrales</em></span></div>
            <div class="row"><span><em v-fit="86">Seat Number</em></span><span><em v-fit="53">Seat C 1</em></span></div>
            <div class="row"><span><em v-fit="41">Image</em></span><span /></div>
          </div>
          <div class="sb"><i /><div><u /><u /><u /></div></div>
        </div>
      </aside>
      <div class="view3d">
        <svg width="1540" height="307" viewBox="355 197 1540 307">
          <path d="M386 504L420 468L572 298L604 263L618 247L661 197" fill="none" stroke="#111" stroke-width=".9" />
          <g shape-rendering="crispEdges" fill="#fff" stroke="#000" stroke-width="1">
            <path d="M357 498q8 0 14 6M362 498q6 1 9 4M417 503l3-1h10l7 1M1852 201l5-3M1883 197l12 8" fill="none" />
            <g v-for="(c, i) in chairs" :key="i">
              <path v-for="(p, j) in c" :key="j" :d="p.d" :fill="p.o ? 'none' : '#fff'" />
            </g>
          </g>
          <g stroke="#0a3cc4" stroke-width="1.3">
            <path v-for="(p, j) in picked" :key="j" :d="p.d" :fill="p.o ? 'none' : 'rgba(20,70,195,.52)'" />
            <path d="M437 423q18-6 44-1l16 4" fill="none" stroke-width="1" />
          </g>
          <text x="497" y="466" font-family="Open Sans" font-size="14" fill="#666" textLength="8" lengthAdjust="spacingAndGlyphs">2</text>
          <g opacity=".6">
            <ellipse cx="1805" cy="345" rx="58" ry="28" fill="none" stroke="#d9d9d9" stroke-width="11" opacity=".75" />
            <ellipse cx="1805" cy="345" rx="64" ry="33" fill="none" stroke="#bbb" stroke-dasharray="2 2" /><ellipse cx="1805" cy="345" rx="51" ry="22" fill="none" stroke="#bbb" stroke-dasharray="2 2" />
            <g fill="#c4c4c4" font-family="Open Sans" font-size="13" font-weight="700"><text x="1760" y="328">W</text><text x="1838" y="328">N</text><text x="1749" y="367">S</text><text x="1843" y="371">E</text></g>
          </g>
          <ellipse cx="1805" cy="346" rx="36" ry="10" fill="#777" opacity=".35" style="filter: blur(4px)" />
          <g stroke="#a8a8a8" fill="#e6e6e6" fill-opacity=".72">
            <path d="M1770 293l37-10 32 11-36 13z" /><path d="M1770 293l33 14v46l-32-13z" fill="#dadada" fill-opacity=".7" /><path d="M1803 307l36-13-1 44-35 15z" fill="#d5d5d5" fill-opacity=".7" />
          </g>
          <g fill="#8b9299" font-family="Open Sans" font-weight="700" font-size="11">
            <text transform="translate(1775 322) skewY(22)" textLength="25" lengthAdjust="spacingAndGlyphs">FRONT</text>
            <text transform="translate(1808 331) skewY(-21)" textLength="26" lengthAdjust="spacingAndGlyphs">RIGHT</text>
            <text transform="translate(1797 294) skewY(18)" font-size="7" fill="#aaa">TOP</text>
          </g>
          <g fill="#f4f4f4" stroke="#555a66" stroke-width="1.2">
            <path d="M1844.5 212.5h11v3.5h-11z" /><path d="M1866.5 206.500h6v8h-6zM1863.5 208.500h6v8h-6z" /><path d="M1880.5 207h3l2.500 3 2.500-3h3l-3.500 4.800 3.500 4.700h-3l-2.500-3-2.500 3h-3l3.500-4.700z" />
          </g>
          <g stroke="#b5b5b5" stroke-width="1.5" fill="#f4f4f4" fill-opacity=".65">
            <path d="M1860 504V402q0-4 4-4h26q4 0 4 4v102" />
            <circle cx="1877" cy="429" r="11" fill="#e8eaec" /><circle cx="1877" cy="429" r="6" fill="#fff" /><path d="M1864 455h26" />
            <path d="M1869 464h11v14h-11z" fill="#a9cc98" stroke="#8fb57e" /><circle cx="1880" cy="474" r="4" fill="#fff" stroke="#999" /><path d="M1882 477l3 3" stroke="#999" stroke-width="2" />
          </g>
          <path d="M1874 448h6l-3 3zM1874 490h6l-3 3z" fill="#999" />
          <circle cx="1888" cy="403" r="4" fill="#ddd" stroke="#aaa" /><path d="M1886 401l4 4M1890 401l-4 4" stroke="#888" />
          <linearGradient id="sh" x1="0" y1="0" x2="0" y2="1"><stop offset="0" stop-color="#000" stop-opacity="0" /><stop offset="1" stop-color="#000" stop-opacity=".22" /></linearGradient>
          <rect x="355" y="497" width="1540" height="7" fill="url(#sh)" />
        </svg>
      </div>
      <div class="vsb"><i /></div>
    </main>

    <section class="dynamo">
      <div class="glass">
        <svg class="blurred" width="1910" height="34" viewBox="3 505 1910 34" preserveAspectRatio="none">
          <defs><linearGradient id="gl"><stop offset="0" stop-color="#e6fbff" /><stop offset=".04" stop-color="#fff" /><stop offset=".12" stop-color="#fafafa" /><stop offset=".18" stop-color="#eefcff" /><stop offset=".22" stop-color="#fff" /><stop offset=".35" stop-color="#f9f9f9" /><stop offset=".5" stop-color="#f4f6f6" /><stop offset=".62" stop-color="#fff" /><stop offset=".73" stop-color="#f3f3f3" /><stop offset=".8" stop-color="#fff" /><stop offset="1" stop-color="#e4fbff" /></linearGradient></defs>
          <rect x="3" y="505" width="1910" height="35" fill="url(#gl)" />
          <g fill="none" stroke="#c9f2fd" stroke-width="12" style="filter: blur(4px)"><path v-for="(c, i) in chairs" :key="i" :d="ghostOf(c)" /></g>
          <g fill="none" stroke="#9db6d6" stroke-width="2.5" style="filter: blur(2px)">
            <path v-for="(c, i) in chairs" :key="i" :d="ghostOf(c)" />
            <path d="M400 548c2-26 8-36 26-38 22 0 34 6 38 38M484 548c2-24 10-34 26-35 22 0 34 8 40 35M568 548c4-18 10-25 24-26 18 0 32 6 38 26M650 548c4-12 12-14 22-14 12 0 18 4 22 14" stroke-width="3" />
            <path d="M380 505l2 40M464 516l2 30M484 518l-4 30M549 524l2 20M570 526l-3 20" stroke="#8fa6c4" stroke-width="5" />
          </g>
        </svg>
        <svg width="20" height="20" viewBox="0 0 20 20"><linearGradient id="rg" x2="1" y2="1"><stop stop-color="#1f4f9f" /><stop offset="1" stop-color="#e4eefb" /></linearGradient><path d="M0 0h20v20H0z" fill="url(#rg)" /><path d="M5 2l6-1 3 3-1 4 5 6-4-1-4-3-2 6-4-1z" fill="#0b2a6b" /></svg>
        <span v-fit="54">Dynamo</span>
        <div class="wb"><span><svg width="17" height="6"><rect x=".5" y=".5" width="16" height="4" fill="#fff" stroke="#556" /></svg></span><span><svg width="18" height="15"><rect x=".7" y=".7" width="16" height="13" rx="1" fill="#eef0f2" stroke="#445" stroke-width="1.3" /><rect x="5" y="4.5" width="8" height="5" fill="#fff" stroke="#445" stroke-width="1.3" /></svg></span><span><svg width="16" height="14"><path d="M1 1h4l3 4 3-4h4l-4.5 6 4.5 6h-4l-3-4-3 4H1l4.5-6z" fill="#fff" stroke="#445" /></svg></span></div>
      </div>
      <div class="win">
        <div class="menu"><span v-for="m in menu" :key="m[0]" v-fit="m[1]">{{ m[0] }}</span></div>
        <div class="tools"><Ico n="dnew" /><Ico n="dopen" /><Ico n="dsave" /><Ico n="dundo" /><Ico n="dredo" /><Ico n="cam" /></div>
        <div class="dtabs">
          <div><span v-fit="183">04 Map Data to Seats.dyn</span><svg width="12" height="12"><path d="M1 1l10 10M11 1L1 11" stroke="#777" stroke-width="2.2" /></svg></div>
          <svg width="14" height="13"><path d="M0 1.5h14M0 6.5h14M0 11.5h14" stroke="#777" stroke-width="2" /></svg>
        </div>
        <div class="ws">
          <div class="world">
            <div class="area"><span v-fit="256">Map Donor data to each seat</span></div>
            <svg class="wires" width="1916" height="1027"><path v-for="(w, i) in wires" :key="i" :d="wire(w)" /></svg>
            <template v-for="(n, i) in nodes" :key="i">
              <div v-if="n.stack" class="stk" :style="px({ x: n.x + 3, y: n.y - 4, w: n.w - 6, h: 6 })" />
              <div class="node" :class="{ ghost: n.ghost, cb: n.code }" :style="px(n)">
                <div class="nh"><span v-fit="n.tw">{{ n.t }}</span></div>
                <div v-if="n.path" class="fp">
                  <div><button><span v-fit="34">Browse...</span></button><b>&gt;</b></div>
                  <p><span v-fit="243">C:\...\Projects\SmithGroupJJR Workshop\04 Seating\DonorList.xlsx</span></p>
                </div>
                <div v-else class="nb">
                  <div v-if="n.ins" class="ports" :style="{ width: n.iw + 'px' }"><div v-for="p in n.ins" :key="p"><span v-fit="portW[p]">{{ p }}</span></div></div>
                  <div v-if="n.code" class="code" :style="{ width: n.cw + 'px' }"><pre v-for="(r, k) in n.code" :key="k"><span v-for="(s, m) in r" :key="m" :style="{ color: s[1] }">{{ s[0] }}</span></pre></div>
                  <div class="ports o" :style="{ width: n.ow + 'px' }"><div v-for="(p, k) in n.outs" :key="k" :class="{ e: !p }"><span v-fit="portW[p]">{{ p }}</span></div></div>
                </div>
                <div v-if="!n.path" class="nf" :class="{ bar: n.bar }"><i /><u v-if="n.bar" /></div>
              </div>
            </template>
            <svg class="wires" width="1916" height="1027">
              <template v-for="(w, i) in wires" :key="i"><path v-if="i" class="dot" :d="`M${w[0]} ${w[1] - 3}a3 3 0 0 1 0 6z`" /><path class="dot" :d="`M${w[2]} ${w[3] - 3.5}a3.5 3.5 0 0 0 0 7z`" /></template>
            </svg>
            <div v-for="(n, i) in notes" :key="i" class="note" :style="px(n)"><span v-for="t in n.l" :key="t[0]" v-fit="t[1]">{{ t[0] }}</span></div>
          </div>
          <div class="lib"><svg width="14" height="12"><path d="M1 1v10M4 1v10" stroke="#888" stroke-width="1.4" /><path d="M6 1l7 5-7 5z" fill="#888" /></svg><span>Library</span></div>
          <div class="zoom"><div class="z1"><Ico n="fitv" /><Ico n="plus" /><Ico n="minus" /></div><div class="z2"><Ico n="pan" /></div></div>
        </div>
      </div>
    </section>
  </div>
</template>

<style>
body { margin: 0; overflow: hidden; }
</style>
<style scoped>
.app { position: relative; width: 1916px; height: 1027px; overflow: hidden; display: flex; flex-direction: column; font: 14.5px/18px "Open Sans", "Noto Sans", sans-serif; color: #1c1c1c; background: #f0f0f0; }
.app * { box-sizing: border-box; }
.app span { white-space: nowrap; }
.app span, .app em { font-style: normal; display: inline-block; flex: none; }
.titlebar { height: 28px; flex: none; display: flex; border-bottom: 1px solid #5c6066; background: #9dbcdb; }
.qat { width: 600px; display: flex; align-items: center; padding-bottom: 2px; background: linear-gradient(#e6e6e6, #bdbdbd); border-right: 1px solid #eef4fa; }
.qsep { width: 1px; height: 26px; background: #a9a9a9; }
.doc { width: 565px; padding: 5px 0 0 170px; background: linear-gradient(90deg, #a3c1e2, #a9c8e8 18%, #c3daf0 32%, #cfe2f4 60%, #9dbfe2 78%, #92b4d8 93%, #5f7897); text-shadow: 0 0 6px #fff; }
.info { width: 602px; display: flex; align-items: center; background: linear-gradient(#e6e6e6, #b9b9b9); }
.tri { width: 18px; height: 27px; flex: none; border-right: 1px solid #111; position: relative; }
.tri::after { content: ""; position: absolute; left: 4px; top: 8px; border-left: 6px solid #333; border-top: 5px solid transparent; border-bottom: 5px solid transparent; }
.search { width: 224px; height: 27px; background: #fff; border-right: 1px solid #111; border-bottom: 2px solid #111; padding: 4px 3px; flex: none; color: #666; font-size: 13.5px; }
.search span { font-style: italic; }
.user { margin-left: 6px; font-size: 14px; }
.m5 { margin-left: 4px; } .m9 { margin-left: 9px; } .m10 { margin-left: 11px; } .m11 { margin-left: 11px; } .m12 { margin-left: 12px; } .m14 { margin-left: 14px; }
.frame { flex: 1; padding-left: 18px; background: linear-gradient(#8aabc9, #9cbcda); border-left: 1px solid #dfe9f2; }
.winbtns { display: flex; width: 129px; height: 22px; border: 1px solid #3c4756; border-top: 0; border-radius: 0 0 5px 5px; overflow: hidden; }
.winbtns span { display: flex; width: 35px; align-items: center; justify-content: center; background: linear-gradient(#b9c9da 0, #a3b5c9 45%, #7d92ab 50%, #9fb6ce); border-right: 1px solid #4d5a6b; }
.winbtns span:first-child { padding-top: 7px; }
.winbtns .x { width: 59px; border: 0; background: linear-gradient(#e2a093, #d5796a 45%, #c33a25 50%, #d9664a); }
.appbtn { position: absolute; left: 0; top: 0; width: 37px; height: 39px; background: linear-gradient(#c2c2c2, #888); border: solid #111; border-width: 0 1px 1px 0; }
.tabs { height: 24px; flex: none; background: #9f9f9f; display: flex; padding-left: 64px; gap: 24.5px; align-items: center; line-height: 20px; padding-top: 3px; }
.active { margin-left: -11px; width: 183px; height: 21px; border: 1px solid #55d81f; border-bottom: 0; padding-left: 9px; background: linear-gradient(#b5d7a8, #ddeed6); }
.pill { margin-left: 5px; margin-top: -4px; }
.ribbon { height: 112px; flex: none; display: flex; border: solid #58be22; border-width: 1px 0; background: linear-gradient(#cfe6c3, #8c8a8a); }
.pnl { background: #fff; display: flex; border-right: 1px solid #8f8f8f; flex: none; line-height: 20px; color: #333; }
.select { width: 58px; flex-direction: column; }
.modify { width: 54px; height: 89px; margin-top: 4px; background: linear-gradient(#cfeaf9, #c3e6f7); border: 1px solid #1c6fd0; display: flex; flex-direction: column; align-items: center; padding-top: 8px; }
.modify span { margin-top: 12px; }
.strip { margin-top: 3px; height: 14px; width: 55px; background: #efefef; display: flex; justify-content: center; align-items: center; }
.strip i { border-top: 6px solid #333; border-left: 5px solid transparent; border-right: 5px solid transparent; }
.pp { width: 55px; flex-direction: column; padding: 5px 0 0 3px; gap: 4px; }
.pi { width: 47px; height: 41px; display: flex; align-items: center; justify-content: center; }
.pi.on { background: #8db9e6; border: 1px solid #1c6fd0; }
.d { width: 0; height: 0; display: block; border-top: 4px solid #444; border-left: 3.5px solid transparent; border-right: 3.5px solid transparent; }
.d.g { border-top-color: #999; }
.big { display: flex; flex-direction: column; align-items: center; padding-top: 8px; }
.big svg { margin-bottom: 5px; }
.big.off { color: #b4b4b4; }
.big.off svg:not(:only-child) { margin-bottom: 4px; }
.clip { width: 99px; padding-left: 17px; gap: 19px; }
.clip .big { padding-top: 7px; }
.clip .big i { margin-top: 4px; }
.c3 { display: grid; grid-template-rows: repeat(3, 31px); padding-top: 2px; align-items: center; justify-items: center; height: 98px; }
.c2 { display: grid; grid-template-rows: repeat(2, 45px); padding-top: 4px; align-items: center; justify-items: center; height: 98px; }
.geo { width: 173px; padding-left: 7px; }
.lab { width: 90px; justify-items: start; }
.lab div { display: flex; align-items: center; }
.lab span { margin: 0 11px 0 7px; }
.geo .c3:nth-child(3) { margin-left: 11px; }
.geo .c3:nth-child(4) { margin-left: 10px; }
.mod { width: 299px; padding-left: 7px; gap: 12px; }
.mod .c3:nth-child(5) { margin-left: 2px; }
.mod .c3:nth-child(n + 6) { margin-left: -1px; }
.view { width: 81px; padding-left: 7px; gap: 9px; }
.view .v2:nth-child(2) { width: 7px; }
.v2 { display: grid; grid-template-rows: repeat(2, 31px); padding-top: 18px; align-items: center; justify-items: center; align-content: start; }
.meas { width: 70px; padding-left: 6px; gap: 10px; }
.create { width: 107px; padding-left: 6px; gap: 6px; border-right: 4px solid #9b9b9b; }
.ef { width: 55px; justify-content: center; } .ho { width: 78px; justify-content: center; } .rh { width: 113px; border: 0; padding-left: 7px; gap: 7px; }
.options { height: 33px; flex: none; display: flex; align-items: center; background: #d8e3d2; padding: 2px 0 0 7px; border-bottom: 1px solid #7d7d7d; }
.grip { width: 7px; height: 29px; margin: -2px 0 0 29px; border-bottom: 1px solid #555; background: linear-gradient(#eee 0, #eee 45%, #bbb 46%, #ccc 80%, #eee 81%); }
.gl { width: 1px; height: 28px; background: #999; }
.box { width: 16px; height: 16px; margin: 0 5px 0 11px; border: 1px solid #8b8f8b; background: #f6f6f6; box-shadow: inset 0 0 0 2px #fff, inset 0 0 4px 3px #ccc; }
.osep { width: 1px; height: 28px; margin-left: 13px; background: #999; }
.act { margin-left: 10px; width: 148px; height: 30px; border: 1px solid #8d8d8d; background: #f5f5f5; padding: 4px 0 0 5px; }
.main { height: 307px; flex: none; display: flex; }
.props { width: 355px; display: flex; flex-direction: column; background: #f0f0f0; overflow: hidden; border-right: 1px solid #777; }
.ph { width: 350px; height: 26px; flex: none; background: #bccad9; display: flex; justify-content: space-between; align-items: center; padding: 0 6px 1px 0; color: #4a5560; font-size: 13.5px; }
.type { margin-top: 2px; width: 348px; height: 90px; flex: none; border-top: 1px solid #888; border-right: 1px solid #d0d0d0; background: linear-gradient(#fff, #eee); display: flex; align-items: center; padding: 2px 2px 0; color: #444; }
.thumb { width: 82px; height: 82px; border: 1px solid #ccc; background: #fff; margin-right: 5px; }
.dd { border-top: 5px solid #444; border-left: 5px solid transparent; border-right: 5px solid transparent; margin-left: auto; }
.dd.k { border-top-color: #000; }
.filt { display: flex; height: 29px; flex: none; align-items: center; }
.sel { width: 251px; height: 27px; margin-right: 6px; border: 1px solid #777; border-left: 0; border-radius: 0 2px 2px 0; background: linear-gradient(#f3f3f3, #ddd 80%, #eee); display: flex; align-items: center; padding: 0 5px 0 2px; }
.filt > span { margin: 0 0 3px 4px; }
.grid { display: flex; flex: 1; }
.rows { width: 328px; background: #fff; }
.grp { height: 24px; background: #dadada; display: flex; justify-content: space-between; padding: 3px 6px 0 1px; }
.row { height: 24px; display: flex; border-bottom: 1px dotted #777; }
.row > span:first-child { width: 163px; padding: 2px 0 0 8px; border-right: 1px dotted #777; }
.row > span:last-child { width: 164px; padding: 2px 0 0 2px; border-right: 1px dotted #777; }
.row .edit { border: 1px solid #000 !important; padding: 1px 0 0 1px !important; }
.row.dim { color: #858585; }
.sb { width: 19px; background: #eaeaea; display: flex; flex-direction: column; align-items: center; }
.sb > i { margin: 8px 0 10px; border-bottom: 5px solid #444; border-left: 5px solid transparent; border-right: 5px solid transparent; }
.sb div { width: 17px; flex: 1; border: 1px solid #999; border-bottom: 0; border-radius: 2px 2px 0 0; background: linear-gradient(90deg, #eee, #ccc); padding-top: 68px; }
.sb u { display: block; width: 9px; height: 2px; background: #777; margin: 0 3px 2px; }
.view3d { width: 1540px; background: #fff; }
.view3d svg { display: block; }
.vsb { flex: 1; background: #f0f0f0; padding: 8px 0 0 6px; }
.vsb i { display: block; width: 0; border-bottom: 6px solid #444; border-left: 5px solid transparent; border-right: 5px solid transparent; }
.dynamo { flex: 1; margin: 0 2px 0 3px; border: solid #555; border-width: 1px 1px 0; border-radius: 7px 7px 0 0; overflow: hidden; display: flex; flex-direction: column; background: linear-gradient(90deg, #d8f6fb, #eefcff 5px, #eefcff 1904px, #cdeef8), #dff; }
.glass { position: relative; height: 34px; flex: none; display: flex; padding-left: 8px; align-items: center; }
.glass > * { position: relative; margin-left: 0; }
.glass > span { margin: 0 0 2px 6px; }
.glass .blurred { position: absolute; left: 0; top: 0; }
.wb { margin-left: auto; margin-right: 4px; align-self: flex-start; width: 128px; height: 24px; border: 1px solid #9a9a9a; border-top: 0; border-radius: 0 0 5px 5px; display: flex; background: rgba(255, 255, 255, .55); }
.glass > .wb { margin-left: auto; }
.wb span { width: 35px; display: flex; align-items: center; justify-content: center; border-right: 1px solid #aaa; }
.wb span:first-child { padding-top: 10px; }
.wb span:last-child { flex: 1; border: 0; }
.win { flex: none; height: 488px; margin-left: 7px; border: 1px solid #666; border-bottom: 0; display: flex; flex-direction: column; background: #353535; width: 1897px; }
.menu { height: 31px; flex: none; display: flex; align-items: center; gap: 39px; padding-left: 20px; border-bottom: 1px solid #424242; color: #aaa; font-size: 14px; padding-bottom: 1px; }
.tools { height: 40px; flex: none; display: flex; align-items: center; padding-left: 21px; border-bottom: 1px solid #454545; gap: 29px; }
.tools > :last-child { margin-left: auto; margin-right: 22px; }
.dtabs { height: 26px; flex: none; display: flex; align-items: center; justify-content: space-between; background: #222; border-bottom: 1px solid #444; padding-right: 5px; }
.dtabs div { width: 250px; height: 25px; background: #353535; display: flex; align-items: center; justify-content: space-between; padding: 0 5px 1px 11px; color: #b9b9b9; font-weight: 600; border-right: 1px solid #454545; }
.ws { position: relative; flex: 1; overflow: hidden; background: #f9f9f9; }
.world { position: absolute; left: -12px; top: -637px; width: 1916px; height: 1027px; }
.area { position: absolute; left: 104px; top: 652px; width: 1680px; height: 359px; background: #e6d9e9; font-size: 20px; line-height: 22px; padding-left: 4px; color: #111; }
.wires { position: absolute; left: 0; top: 0; }
.wires path { fill: none; stroke: #454545; stroke-width: 2; }
.wires .dot { fill: #444; stroke: none; }
.node { position: absolute; background: #cac5be; border: 1px solid #85827d; border-bottom-width: 2px; font-size: 9.3px; line-height: 16px; color: #555; }
.nh { height: 18px; margin: -1px -1px 0; background: #5d5b58; color: #fff; font-weight: 600; font-size: 9.8px; line-height: 18px; text-align: center; }
.ghost { background: #d9d6cf; border-color: #a5a29d; }
.ghost .nh { background: #cac5be; color: #666; border: 1px solid #8f8c88; line-height: 16px; }
.nb { display: flex; align-items: flex-start; }
.ports div { height: 16px; margin-top: 1px; background: #e4e1dc; padding-left: 3px; letter-spacing: -.1px; line-height: 15px; white-space: nowrap; }
.ports.o { margin-left: auto; }
.ports.o div { padding: 0 3px 0 0; text-align: right; }
.ghost .ports div { background: #ecebe7; }
.cb .ports div { height: 11px; line-height: 10px; }
.cb .ports.o div { text-align: center; font-weight: 600; font-size: 8px; padding: 0; }
.cb .ports.o div.e { background: none; }
.code { background: #e8e5e1; margin-top: 1px; }
.code pre { margin: 0; padding-left: 2px; font: 9px/12px "DejaVu Sans Mono", monospace; height: 12px; }
.nf { position: absolute; right: 5px; bottom: 4px; display: flex; gap: 8px; align-items: center; }
.nf.bar { right: 4px; }
.nf i { width: 6px; height: 6px; border: 1px solid #86837e; }
.nf u { width: 1px; height: 5px; background: #86837e; }
.fp > div { display: flex; height: 17px; justify-content: space-between; }
.fp button { width: 246px; border: 0; padding: 0; background: linear-gradient(#f4f2ef, #d8d4ce); font: 8.5px/14px "Open Sans", sans-serif; color: #333; }
.fp b { width: 16px; background: #e4e1dc; text-align: center; font-size: 8px; line-height: 17px; }
.fp p { margin: 0 0 0 1px; font-size: 8.5px; line-height: 17px; color: #333; }
.stk { position: absolute; background: #d9d6cf; border: 1px solid #a5a29d; }
.note { position: absolute; background: #eee; box-shadow: 0 0 3px rgba(90, 70, 100, .4); display: flex; flex-direction: column; align-items: flex-start; justify-content: center; padding-left: 6px; font-size: 8.2px; line-height: 10px; color: #555; }
.lib { position: absolute; left: 0; top: 27px; width: 25px; height: 98px; background: #222; display: flex; flex-direction: column; align-items: center; padding-top: 12px; gap: 12px; }
.lib span { writing-mode: vertical-rl; transform: rotate(180deg); color: #999; font-size: 15px; line-height: 20px; letter-spacing: .2px; }
.zoom { position: absolute; right: 9px; top: 11px; }
.zoom > div { width: 31px; background: #fff; border-radius: 2px; box-shadow: 0 0 4px rgba(0, 0, 0, .4); display: flex; flex-direction: column; align-items: center; }
.z1 { height: 90px; padding-top: 8px; gap: 14px; }
.z1 svg:last-child { margin-top: 5px; }
.z2 { height: 31px; margin-top: 9px; justify-content: center; }
</style>
